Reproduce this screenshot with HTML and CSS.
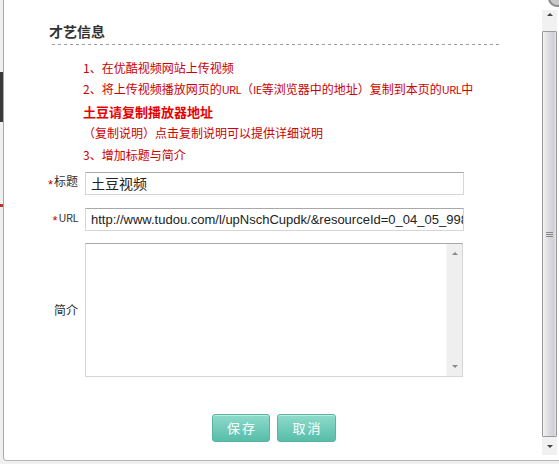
FILE: index.html
```html
<!DOCTYPE html>
<html lang="zh-CN">
<head>
<meta charset="utf-8">
<title>才艺信息</title>
<link rel="stylesheet" href="styles.css">
</head>
<body>
<div class="page">
  <div class="dialog">
    <div class="body">
      <h2 class="title">才艺信息</h2>
      <div class="rule"></div>
      <div class="notes">
        <p>1、在优酷视频网站上传视频</p>
        <p>2、将上传视频播放网页的<span class="lat">URL</span>（<span class="lat">IE</span>等浏览器中的地址）复制到本页的<span class="lat">URL</span>中</p>
        <p class="strong">土豆请复制播放器地址</p>
        <p>（复制说明）点击复制说明可以提供详细说明</p>
        <p>3、增加标题与简介</p>
      </div>
      <div class="form">
        <label class="lbl"><span class="req">*</span>标题</label>
        <input class="field" type="text" value="土豆视频">
        <label class="lbl"><span class="req">*</span><span class="lat">URL</span></label>
        <input class="field url" type="text" value="http://www.tudou.com/l/upNschCupdk/&amp;resourceId=0_04_05_998">
        <label class="lbl">简介</label>
        <div class="area">
          <textarea class="area-text"></textarea>
          <div class="mini-bar">
            <span class="tri-up small"></span>
            <span class="tri-down small"></span>
          </div>
        </div>
      </div>
      <div class="actions">
        <button class="btn" type="button">保存</button>
        <button class="btn" type="button">取消</button>
      </div>
    </div>
    <div class="vbar">
      <div class="vbar-btn up"><span class="tri-up"></span></div>
      <div class="vbar-thumb"><span class="grip"></span></div>
      <div class="vbar-btn down"><span class="tri-down"></span></div>
    </div>
  </div>
  <div class="close"></div>
</div>
</body>
</html>
```

FILE: styles.css
```css
* {
  box-sizing: border-box;
  margin: 0;
  padding: 0;
}

body {
  margin: 0;
  width: 559px;
  height: 464px;
  overflow: hidden;
  font-family: "Noto Sans CJK SC", "Liberation Sans", sans-serif;
  background: #f2f2f2;
}

.page {
  position: relative;
  width: 559px;
  height: 464px;
  padding-left: 3px;
  overflow: hidden;
  background: linear-gradient(#f0f0f0 0 72px, #3a3a3a 72px 122px, #f0f0f0 122px 204px, #b33 204px 207px, #f0f0f0 207px);
}

.dialog {
  display: flex;
  width: 556px;
  height: 461px;
  background: #fff;
  border-left: 1px solid #a9a9a9;
  border-bottom: 1px solid #b5b5b5;
  border-bottom-left-radius: 4px;
  padding-right: 2px;
}

.body {
  flex: 1;
  padding: 23px 0 0 45px;
}

.title {
  font-size: 14px;
  line-height: 16px;
  font-weight: bold;
  color: #333;
}

.rule {
  margin: 5px 0 0 3px;
  width: 448px;
  height: 1px;
  background: repeating-linear-gradient(90deg, #9a9a9a 0 3px, transparent 3px 6px);
}

.notes {
  margin-top: 11.5px;
  padding-left: 34px;
  font-size: 12px;
  line-height: 21.5px;
  color: #cc0000;
}

.lat {
  font-size: 11px;
  letter-spacing: -0.5px;
}

.notes .strong {
  font-size: 13px;
  font-weight: bold;
  color: #e80000;
}

.form {
  margin: 6.5px 0 0 -7px;
  display: grid;
  grid-template-columns: 36px 379px;
  grid-template-rows: 23px 24px 134px;
  column-gap: 7px;
  row-gap: 12px;
}

.lbl {
  align-self: center;
  text-align: right;
  white-space: nowrap;
  font-size: 12px;
  line-height: 16px;
  color: #333;
}

.req {
  color: #cc0000;
  margin-right: 1px;
  font-family: "Liberation Sans", sans-serif;
  font-size: 13px;
  vertical-align: -3px;
}

.field {
  height: 23px;
  width: 379px;
  align-self: end;
  border: 1px solid #d6d6d6;
  border-top-color: #a8a8a8;
  padding: 0 0 0 5px;
  font-family: "Liberation Sans", "Noto Sans CJK SC", sans-serif;
  font-size: 13px;
  color: #222;
  background: #fff;
  outline: none;
}

.field:first-of-type {
  font-size: 14px;
}

.area {
  display: flex;
  width: 378px;
  height: 134px;
  border: 1px solid #d6d6d6;
  border-top-color: #a8a8a8;
}

.area-text {
  flex: 1;
  border: none;
  resize: none;
  outline: none;
  overflow: hidden;
}

.mini-bar {
  width: 16px;
  background: #efefef;
  border-left: 1px solid #f6f6f6;
  display: flex;
  flex-direction: column;
  justify-content: space-between;
  align-items: center;
  padding: 8px 0 8px;
}

.tri-up,
.tri-down {
  display: block;
  width: 0;
  height: 0;
  border-left: 3px solid transparent;
  border-right: 3px solid transparent;
}

.tri-up {
  border-bottom: 3px solid #444;
}

.tri-down {
  border-top: 3px solid #444;
}

.tri-up.small {
  border-bottom-color: #888;
}

.tri-down.small {
  border-top-color: #888;
}

.actions {
  display: flex;
  gap: 7px;
  margin-top: 37px;
  padding-left: 163px;
}

.btn {
  width: 58px;
  height: 28px;
  border: 1px solid #58b3a1;
  border-radius: 3px;
  background: linear-gradient(#8edbcb, #57bda9);
  box-shadow: inset 0 1px 0 rgba(255, 255, 255, 0.45);
  color: #fff;
  font-family: "Noto Sans CJK SC", sans-serif;
  font-size: 13px;
  letter-spacing: 2px;
  padding-left: 2px;
}

.btn + .btn {
  width: 59px;
}

.vbar {
  width: 15px;
  margin: 10px 0 5px;
  display: flex;
  flex-direction: column;
}

.vbar-btn {
  display: flex;
  justify-content: center;
  background: #f1f1f1;
}

.vbar-btn.up {
  height: 21px;
  padding-top: 3px;
}

.vbar-btn.down {
  height: 18px;
  align-items: center;
}

.vbar-thumb {
  flex: 1;
  border: 1px solid #9a9a9a;
  border-radius: 1px;
  background: linear-gradient(90deg, #f2f2f2 0, #dcdce0 45%, #cfcfd4 80%, #e4e4e4 100%);
  display: flex;
  align-items: center;
  justify-content: center;
}

.grip {
  display: block;
  width: 7px;
  height: 5px;
  background: repeating-linear-gradient(#888 0 1px, transparent 1px 2px);
}

.close {
  position: absolute;
  left: 548px;
  top: -11px;
  width: 18px;
  height: 18px;
  border-radius: 50%;
  border: 2px solid #8a8a8a;
  background: #c8c8c8;
}
```
